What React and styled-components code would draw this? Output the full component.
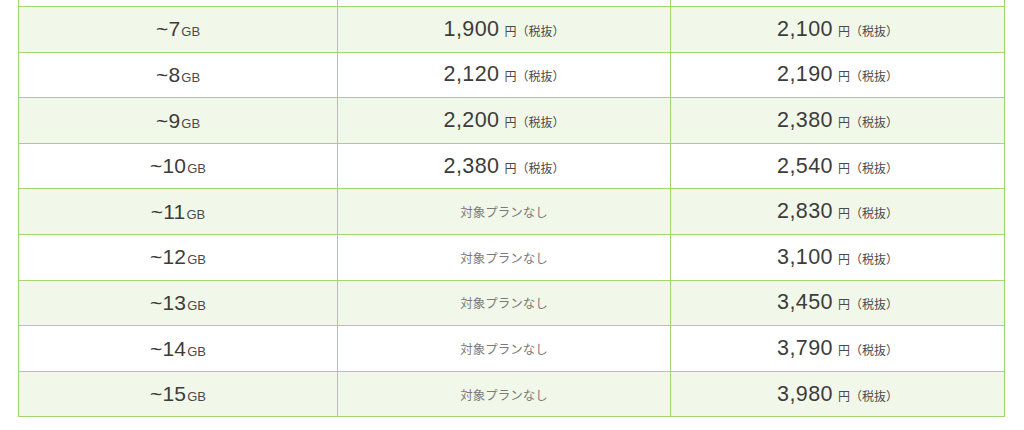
import React from 'react';
import styled, { createGlobalStyle } from 'styled-components';

const GlobalStyle = createGlobalStyle`
    html, body {
        margin: 0;
        padding: 0;
        background: #ffffff;
    }
    body {
        font-family: 'Liberation Sans', 'Noto Sans CJK JP', sans-serif;
        color: #3c3c3c;
        overflow: hidden;
    }
`;

const Wrapper = styled.div`
    padding: 0 19px 0 18px;
`;

const PlanTable = styled.table`
    width: 987px;
    border-collapse: collapse;
    table-layout: fixed;
`;

const Row = styled.tr`
    background-color: ${(p) => (p.$shaded ? '#f2f8e9' : '#ffffff')};
`;

const Cell = styled.td`
    height: 44.62px;
    padding: 0;
    border: 1px solid #a3d671;
    text-align: center;
    vertical-align: middle;
    white-space: nowrap;
`;

// the row above ~7GB that is scrolled out of view
const ClippedCell = styled(Cell)`
    height: 6px;
    border-top: none;
`;

const Capacity = styled.span`
    font-size: 21px;
    color: #3c3c3c;
    letter-spacing: 0.2px;
`;

const Unit = styled.span`
    font-size: 13px;
    color: #4a4a4a;
    margin-left: 1px;
`;

const Price = styled.span`
    font-size: 21.5px;
    color: #3c3c3c;
    letter-spacing: 0.4px;
`;

const Tax = styled.span`
    font-family: 'Noto Sans CJK JP', sans-serif;
    font-size: 12px;
    color: #4a4a4a;
    margin-left: 5px;
`;

const NoPlan = styled.span`
    font-family: 'Noto Sans CJK JP', sans-serif;
    font-size: 12.5px;
    color: #7a7a7a;
`;

const rows = [
    { gb: 7, a: '1,900', b: '2,100' },
    { gb: 8, a: '2,120', b: '2,190' },
    { gb: 9, a: '2,200', b: '2,380' },
    { gb: 10, a: '2,380', b: '2,540' },
    { gb: 11, a: null, b: '2,830' },
    { gb: 12, a: null, b: '3,100' },
    { gb: 13, a: null, b: '3,450' },
    { gb: 14, a: null, b: '3,790' },
    { gb: 15, a: null, b: '3,980' },
];

const PriceCell = ({ value }) => (
    <Cell>
        {value ? (
            <>
                <Price>{value}</Price>
                <Tax>円（税抜）</Tax>
            </>
        ) : (
            <NoPlan>対象プランなし</NoPlan>
        )}
    </Cell>
);

const App = () => {
    return (
        <>
            <GlobalStyle />
            <Wrapper>
                <PlanTable>
                    <colgroup>
                        <col style={{ width: '319px' }} />
                        <col style={{ width: '333px' }} />
                        <col />
                    </colgroup>
                    <tbody>
                        <Row>
                            <ClippedCell />
                            <ClippedCell />
                            <ClippedCell />
                        </Row>
                        {rows.map((r, i) => (
                            <Row key={r.gb} $shaded={i % 2 === 0}>
                                <Cell>
                                    <Capacity>~{r.gb}</Capacity>
                                    <Unit>GB</Unit>
                                </Cell>
                                <PriceCell value={r.a} />
                                <PriceCell value={r.b} />
                            </Row>
                        ))}
                    </tbody>
                </PlanTable>
            </Wrapper>
        </>
    );
};

export default App;
